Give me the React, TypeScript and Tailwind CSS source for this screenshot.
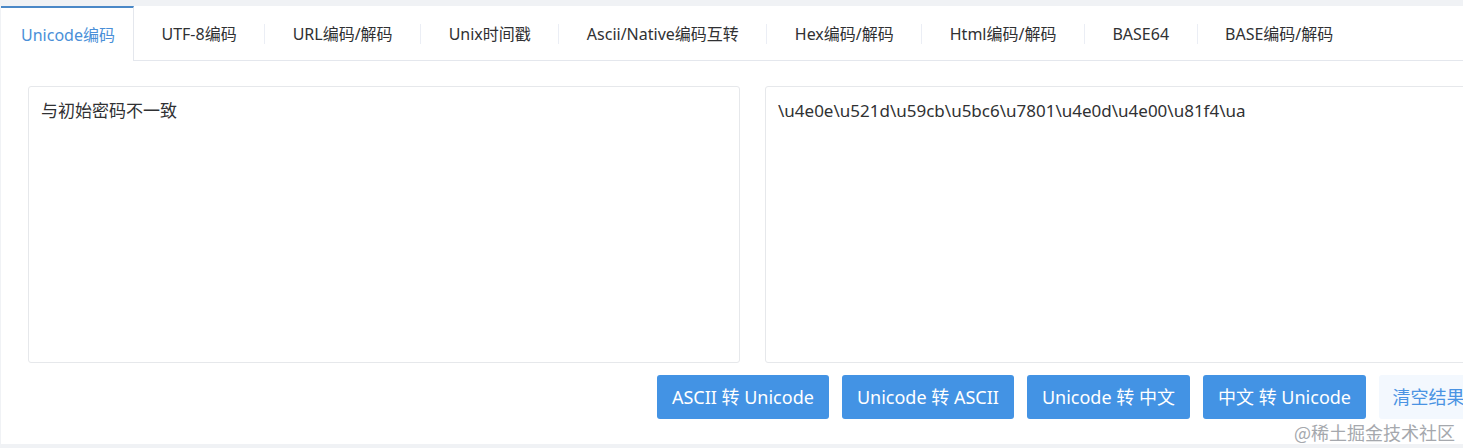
import React from 'react';

const tabs = [
  'Unicode编码',
  'UTF-8编码',
  'URL编码/解码',
  'Unix时间戳',
  'Ascii/Native编码互转',
  'Hex编码/解码',
  'Html编码/解码',
  'BASE64',
  'BASE编码/解码',
];

const actions = ['ASCII 转 Unicode', 'Unicode 转 ASCII', 'Unicode 转 中文', '中文 转 Unicode'];

const font = { fontFamily: '"Microsoft YaHei", "Noto Sans", "Noto Sans CJK SC", sans-serif' };

export default function App() {
  return (
    <div className="w-[1463px] h-[448px] overflow-hidden bg-[#f0f2f5]" style={font}>
      <div className="w-[1505px] pt-[6px] pl-[1px]">
        <div className="bg-white">
          {/* tab bar */}
          <div className="flex h-[55px] border-b border-[#e4e7ed] text-[16px] text-[#303133]">
            {tabs.map((t, i) => (
              <div key={t} className="flex items-center pt-[1px]">
                {i > 1 && <div className="w-px h-[20px] bg-[#ebeef5]" />}
                {i === 0 ? (
                  <div className="h-[55px] flex items-center pl-[20px] pr-[18px] border-t-2 border-[#4a88c7] border-r border-r-[#e4e7ed] bg-white text-[#4a8fd8] -mb-px -mt-px">
                    {t}
                  </div>
                ) : (
                  <div className="px-[27.5px]">{t}</div>
                )}
              </div>
            ))}
          </div>

          {/* panels */}
          <div className="px-[27px] pt-[25px] pb-[25px]">
            <div className="flex gap-[25px]">
              <div className="w-[712px] h-[277px] border border-[#e6e8eb] rounded-[3px] px-[12px] py-[12px] text-[17px] leading-[24px] text-[#303133]">
                与初始密码不一致
              </div>
              <div className="w-[712px] h-[277px] border border-[#e6e8eb] rounded-[3px] px-[12px] py-[12px] text-[17px] leading-[24px] text-[#303133]">
                \u4e0e\u521d\u59cb\u5bc6\u7801\u4e0d\u4e00\u81f4\ua
              </div>
            </div>
            <div className="flex justify-end gap-[13px] mt-[12px] relative">
              {actions.map((a) => (
                <button
                  key={a}
                  className="h-[44px] px-[15px] rounded-[3px] bg-[#4393e4] text-white text-[18px]"
                >
                  {a}
                </button>
              ))}
              <button className="h-[44px] w-[99px] rounded-[3px] bg-[#f3f8fe] text-[#4a93e3] text-[18px]">
                清空结果
              </button>
              <div className="absolute right-[23px] top-[44px] text-[18px] text-[#a5a8ad]" style={{ fontFamily: '"Noto Sans CJK SC", serif' }}>
                @稀土掘金技术社区
              </div>
            </div>
          </div>
        </div>
      </div>
    </div>
  );
}
